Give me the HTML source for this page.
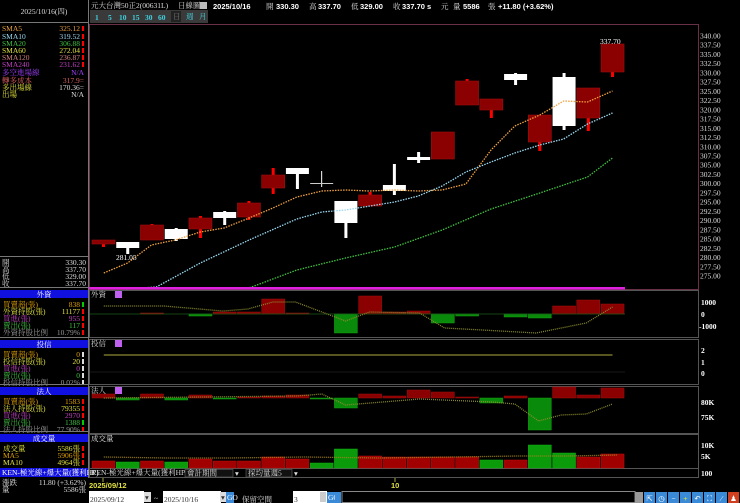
<!DOCTYPE html>
<html><head><meta charset="utf-8"><style>
html,body{margin:0;padding:0;background:#000;width:740px;height:503px;overflow:hidden}
svg{display:block}
text{font-family:"Liberation Serif","Noto Serif CJK SC","Noto Sans CJK TC",serif;font-size:7.5px}
.b{font-family:"Liberation Sans","Noto Sans CJK TC",sans-serif;font-weight:bold}
</style></head><body>
<svg id="s" width="740" height="503" viewBox="0 0 740 503" xmlns="http://www.w3.org/2000/svg">
<rect width="740" height="503" fill="#000"/>
<line x1="88.5" y1="0" x2="88.5" y2="478" stroke="#777"/>
<line x1="0" y1="22.5" x2="88" y2="22.5" stroke="#777"/>
<text x="44" y="14" fill="#ddd" text-anchor="middle">2025/10/16(四)</text>
<g text-anchor="start">
<text x="2" y="31" fill="#e8a040">SMA5</text><text x="80" y="31" fill="#e8a040" text-anchor="end">325.12</text>
<text x="2" y="39" fill="#9ad8f0">SMA10</text><text x="80" y="39" fill="#9ad8f0" text-anchor="end">319.52</text>
<text x="2" y="46" fill="#40c040">SMA20</text><text x="80" y="46" fill="#40c040" text-anchor="end">306.88</text>
<text x="2" y="53" fill="#e0e040">SMA60</text><text x="80" y="53" fill="#e0e040" text-anchor="end">272.04</text>
<text x="2" y="60" fill="#d08080">SMA120</text><text x="80" y="60" fill="#d08080" text-anchor="end">236.87</text>
<text x="2" y="67" fill="#c040c0">SMA240</text><text x="80" y="67" fill="#c040c0" text-anchor="end">231.62</text>
<text x="2" y="75" fill="#a040ff">多空進場線</text><text x="84" y="75" fill="#a040ff" text-anchor="end">N/A</text>
<text x="2" y="83" fill="#e06060">轉多成本</text><text x="84" y="83" fill="#e06060" text-anchor="end">317.9=</text>
<text x="2" y="90" fill="#e0e040">多出場線</text><text x="84" y="90" fill="#ddd" text-anchor="end">170.36=</text>
<text x="2" y="97" fill="#e0e040">出場</text><text x="84" y="97" fill="#ddd" text-anchor="end">N/A</text>
</g>
<g fill="#f00"><rect x="82" y="26" width="2" height="5"/><rect x="82" y="34" width="2" height="5"/><rect x="82" y="41" width="2" height="5"/><rect x="82" y="48" width="2" height="5"/><rect x="82" y="55" width="2" height="5"/><rect x="82" y="62" width="2" height="5"/></g>
<line x1="0" y1="256.5" x2="88" y2="256.5" stroke="#777"/>
<g fill="#ddd"><text x="2" y="265">開</text><text x="86" y="265" text-anchor="end">330.30</text>
<text x="2" y="272">高</text><text x="86" y="272" text-anchor="end">337.70</text>
<text x="2" y="279">低</text><text x="86" y="279" text-anchor="end">329.00</text>
<text x="2" y="286">收</text><text x="86" y="286" text-anchor="end">337.70</text></g>
<g id="left"></g>
<rect x="0" y="468" width="88" height="9" fill="#1010e0"/>
<text x="2" y="475" fill="#fff" font-size="7">KEN-極光線+爆大量(獲利HP)</text>
<text x="2" y="485" fill="#ddd">漲跌</text><text x="86" y="485" fill="#ddd" text-anchor="end">11.80 (+3.62%)</text>
<text x="2" y="492" fill="#ddd">量</text><text x="86" y="492" fill="#ddd" text-anchor="end">5586張</text>

<text x="91" y="8" fill="#ddd" font-size="7">元大台灣50正2(00631L)</text>
<text x="178" y="8" fill="#ddd" font-size="7">日線圖</text>
<rect x="200" y="2" width="7" height="7" fill="#bbb"/>
<text x="213" y="9" fill="#fff" class="b" font-size="9">2025/10/16</text>
<text x="266" y="9" fill="#ddd" font-size="7">開</text><text x="276" y="9" fill="#fff" class="b" font-size="9">330.30</text>
<text x="309" y="9" fill="#ddd" font-size="7">高</text><text x="318" y="9" fill="#fff" class="b" font-size="9">337.70</text>
<text x="351" y="9" fill="#ddd" font-size="7">低</text><text x="360" y="9" fill="#fff" class="b" font-size="9">329.00</text>
<text x="393" y="9" fill="#ddd" font-size="7">收</text><text x="402" y="9" fill="#fff" class="b" font-size="9">337.70 s</text>
<text x="441" y="9" fill="#ddd" font-size="7">元</text>
<text x="453" y="9" fill="#ddd" font-size="7">量</text><text x="463" y="9" fill="#fff" class="b" font-size="9">5586</text>
<text x="488" y="9" fill="#ddd" font-size="7">張</text><text x="498" y="9" fill="#fff" class="b" font-size="9">+11.80 (+3.62%)</text>
<rect x="90" y="10" width="118" height="13" fill="#3a3a3a"/>
<g class="b" font-size="9" fill="#40d0e0">
<text x="95" y="20">1</text><text x="108" y="20">5</text><text x="119" y="20">10</text><text x="132" y="20">15</text><text x="145" y="20">30</text><text x="158" y="20">60</text></g>
<rect x="171" y="11" width="10" height="11" fill="#222"/>
<text x="173" y="19" fill="#777" font-size="7">日</text><text x="186" y="19" fill="#40d0e0" font-size="7">週</text><text x="199" y="19" fill="#40d0e0" font-size="7">月</text>

<rect x="89.5" y="24.5" width="609" height="265" fill="none" stroke="#6a3048"/>
<g id="axis" fill="#ddd" font-size="7.5"></g>
<g id="main"></g>
<rect x="89" y="287" width="536" height="2.5" fill="#e020e0"/>
<text x="600" y="44" fill="#fff" font-size="7.5">337.70</text>
<text x="116" y="260" fill="#fff" font-size="7.5">281.05</text>

<rect x="89.5" y="290.5" width="609" height="47" fill="none" stroke="#555"/>
<rect x="89.5" y="339.5" width="609" height="45" fill="none" stroke="#555"/>
<rect x="89.5" y="386.5" width="609" height="47" fill="none" stroke="#555"/>
<rect x="89.5" y="434.5" width="609" height="34" fill="none" stroke="#555"/>
<rect x="89.5" y="468.5" width="609" height="9" fill="none" stroke="#555"/>
<text x="91" y="297" fill="#ddd" font-size="6.5">外資</text><rect x="115" y="291" width="7" height="7" fill="#c060f0"/>
<text x="91" y="346" fill="#ddd" font-size="6.5">投信</text><rect x="115" y="340" width="7" height="7" fill="#c060f0"/>
<text x="91" y="393" fill="#ddd" font-size="6.5">法人</text><rect x="115" y="387" width="7" height="7" fill="#c060f0"/>
<text x="91" y="441" fill="#ddd" font-size="6.5">成交量</text>
<g id="subs"></g>
<g fill="#fff" class="b" font-size="7">
<text x="701" y="305">1000</text><text x="701" y="317">0</text><text x="699" y="329">-1000</text>
<text x="701" y="353">2</text><text x="701" y="365">1</text><text x="701" y="376">0</text>
<text x="701" y="405">80K</text><text x="701" y="420">75K</text>
<text x="701" y="448">10K</text><text x="701" y="459">5K</text><text x="701" y="476">100</text></g>
<text x="91" y="475" fill="#ddd" font-size="6.5">KEN-極光線+爆大量(獲利HP)</text>
<rect x="185" y="469.5" width="48" height="7.5" fill="#111" stroke="#666" stroke-width=".6"/><text x="187" y="475.5" fill="#ddd" font-size="6">會計期間</text><text x="235" y="476" fill="#ddd" font-size="6">▾</text>
<rect x="246" y="469.5" width="46" height="7.5" fill="#111" stroke="#666" stroke-width=".6"/><text x="248" y="475.5" fill="#ddd" font-size="6">採均量週5</text><text x="294" y="476" fill="#ddd" font-size="6">▾</text>
<line x1="103" y1="478" x2="103" y2="482" stroke="#aa4"/><line x1="395" y1="478" x2="395" y2="482" stroke="#aa4"/>
<text x="89" y="488" fill="#e0e040" class="b" font-size="8">2025/09/12</text>
<text x="391" y="488" fill="#e0e040" class="b" font-size="8">10</text>

<rect x="89" y="491" width="55" height="12" fill="#fff"/><text x="90" y="502" fill="#333" font-size="11" font-family="Liberation Serif">2025/09/12</text>
<rect x="144" y="492" width="7" height="10" fill="#ddd"/><text x="145" y="500" fill="#333" font-size="6">▾</text>
<text x="154" y="501" fill="#ddd" font-size="9">~</text>
<rect x="163" y="491" width="58" height="12" fill="#fff"/><text x="164" y="502" fill="#333" font-size="11">2025/10/16</text>
<rect x="220" y="492" width="6" height="10" fill="#ddd"/><text x="221" y="500" fill="#333" font-size="6">▾</text>
<rect x="226" y="492" width="8" height="11" fill="#3a8ad8"/><text x="227" y="500" fill="#fff" font-size="5">GO</text>
<text x="242" y="502" fill="#ddd" font-size="12">保留空間</text>
<rect x="293" y="491" width="34" height="12" fill="#fff"/><text x="294" y="502" fill="#333" font-size="11">3</text>
<rect x="320" y="492" width="6" height="10" fill="#ccc"/>
<rect x="327" y="492" width="8" height="11" fill="#3a8ad8"/><text x="328" y="500" fill="#fff" font-size="5">GO</text>
<rect x="335" y="492" width="6" height="11" fill="#3a8ad8"/>
<rect x="342" y="491.5" width="293" height="11" fill="#000" stroke="#888"/>
<rect x="635" y="492" width="8" height="11" fill="#999"/>
<g id="icons"></g>
</svg>
<script>
var NS="http://www.w3.org/2000/svg";
function el(p,t,a){var e=document.createElementNS(NS,t);for(var k in a)e.setAttribute(k,a[k]);document.getElementById(p).appendChild(e);return e;}
function tx(p,x,y,s,f,anc){var e=el(p,"text",{x:x,y:y,fill:f});if(anc)e.setAttribute("text-anchor",anc);e.textContent=s;}
function X(x){return 85+(x-85)*1.253;}
function mp(s){return s.split(" ").map(function(q){var a=q.split(",");return X(+a[0]).toFixed(1)+","+a[1];}).join(" ");}
for(var i=0;i<=26;i++){var v=340-i*2.5;var y=36+(340-v)*3.692;tx("axis",700,y+2.5,v.toFixed(2),"#ddd");}
var C=[["r",240,244,240,247],["w",242,248,242,254],["r",225,240,224,240],["w",229,239,228,241],["r",218,229,216,238],["w",212,218,211,225],["r",203,217,201,220],["r",175,188,168,194],["w",168,174,168,189],["w",183,184,171,187],["w",201,223,201,238],["r",195,206,192,206],["w",185,191,164,195],["w",157,160,152,163],["r",132,159,132,159],["r",81,105,79,105],["r",99,110,99,118],["w",74,80,73,85],["r",115,142,115,151],["w",77,126,73,130],["r",88,118,88,131],["r",44,72,44,77]];
function cx(i){return 103.5+24.24*i;}
C.forEach(function(c,i){var x=cx(i);
 if(c[0]=="r"){el("main","rect",{x:x-1.5,y:c[3],width:3,height:c[4]-c[3],fill:"#f00"});el("main","rect",{x:x-11.5,y:c[1],width:23,height:Math.max(1,c[2]-c[1]),fill:"#8b0000",stroke:"#a01010","stroke-width":.6});}
 else{var wd=(i==9)?1:3;el("main","rect",{x:x-wd/2,y:c[3],width:wd,height:c[4]-c[3],fill:"#fff"});el("main","rect",{x:x-11.5,y:c[1],width:23,height:Math.max(1,c[2]-c[1]),fill:(i==9?"#ccc":"#fff")});}
});
function pl(p,pts,col,dash,w){el(p,"polyline",{points:mp(pts),fill:"none",stroke:col,"stroke-width":w||1.3,"stroke-dasharray":dash||""});}
pl("main","100,273 119,263 138,245 157,240 177,232 196,228 216,218 235,208 254,197 274,191 293,190 312,191 332,190 351,191 370,190 389,184 409,150 428,126 448,115 467,101 486,102 506,91","#f0a040","1.5 1.2");
pl("main","118,289 142,287 177,263 216,240 254,219 274,212 293,210 332,202 351,196 370,186 389,172 409,162 428,153 448,145 467,139 486,124 506,113","#9ad8f0","1.5 1.2");
pl("main","212,289 218,287 254,270 293,258 332,247 370,230 409,209 448,193 486,177 506,158","#40c040","1.5 1.2");
function bx(i){return 92+24.24*i;}
function bar(i,t,b,g){el("subs","rect",{x:bx(i),y:Math.min(t,b),width:23,height:Math.max(1,Math.abs(b-t)),fill:g?"#0a8a0a":"#8b0000",stroke:g?"#10a010":"#a01010","stroke-width":.5});}
var FW=[[2,313,314,0],[4,314,316,1],[5,312,314,0],[6,312,314,0],[7,299,314,0],[8,313,314,0],[10,314,333,1],[11,296,314,0],[12,312,314,0],[13,311,314,0],[14,314,323,1],[15,314,316,1],[17,314,317,1],[18,314,318,1],[19,306,314,0],[20,300,314,0],[21,304,314,0]];
FW.forEach(function(b){bar(b[0],b[1],b[2],b[3]);});
el("subs","line",{x1:90,y1:314,x2:625,y2:314,stroke:"#1a5a1a","stroke-width":.8});
pl("subs","100,306 148,306 195,311 215,309 235,302 253,302 293,321 312,312 352,313 372,328 402,330 445,333 485,323 506,307","#8a8a30",1);
el("subs","line",{x1:X(100),y1:355,x2:X(506),y2:355,stroke:"#8a8a30","stroke-width":1.2});
el("subs","line",{x1:90,y1:372,x2:625,y2:372,stroke:"#222","stroke-width":.8});
var FA=[[0,394,398,0],[1,398,400,1],[2,394,398,0],[3,398,400,1],[4,395,398,0],[5,398,399,1],[6,397,398,0],[7,396,398,0],[8,395,398,0],[9,398,399,1],[10,398,408,1],[11,394,398,0],[12,396,398,0],[13,390,398,0],[14,392,398,0],[15,397,398,0],[16,398,403,1],[17,396,398,0],[18,398,430,1],[19,387,398,0],[20,395,398,0],[21,388,398,0]];
FA.forEach(function(b){bar(b[0],b[1],b[2],b[3]);});
pl("subs","100,398 177,397 254,396 274,394 293,405 352,399 410,402 428,404 447,421 465,415 485,414 506,404","#8a8a30",1);
var V=[461,462,461,462,459,461,461,457,459,463,449,456,457,457,457,457,460,460,445,453,457,454];
var VG=[0,1,0,1,0,0,0,0,0,1,1,0,0,0,0,0,1,0,1,1,0,0];
V.forEach(function(t,i){el("subs","rect",{x:bx(i),y:t,width:23,height:468-t,fill:VG[i]?"#0a9a0a":"#a00000",stroke:VG[i]?"#10b010":"#c01010","stroke-width":.5});});
pl("subs","100,457 150,458 200,458 260,457 320,458 380,457 430,456 470,456 510,455","#a08020",1);
function sec(y,title,rows){el("left","rect",{x:0,y:y,width:88,height:8,fill:"#1010e0"});tx("left",44,y+7,title,"#fff","middle");
 rows.forEach(function(r,k){var yy=y+17+k*7;tx("left",3,yy,r[0],r[2]);tx("left",80,yy,r[1],r[2],"end");el("left","rect",{x:82,y:yy-5,width:2,height:5,fill:r[3]});});
 el("left","line",{x1:0,y1:y-2.5,x2:88,y2:y-2.5,stroke:"#777"});}
sec(290,"外資",[["買賣超(張)","838","#e0a000","#0c0"],["外資持股(張)","11177","#e0e040","#f00"],["買進(張)","955","#c040c0","#f00"],["賣出(張)","117","#40c040","#f00"],["外資持股比例","10.79%","#999","#f00"]]);
sec(340,"投信",[["買賣超(張)","0","#e0a000","#ddd"],["投信持股(張)","20","#e0e040","#ddd"],["買進(張)","0","#c040c0","#ddd"],["賣出(張)","0","#40c040","#ddd"],["投信持股比例","0.02%","#999","#ddd"]]);
sec(387,"法人",[["買賣超(張)","1583","#e0a000","#f00"],["法人持股(張)","79355","#e0e040","#f00"],["買進(張)","2970","#c040c0","#f00"],["賣出(張)","1388","#40c040","#0c0"],["法人持股比例","77.90%","#999","#f00"]]);
sec(434,"成交量",[["成交量","5586張","#e0e040","#f00"],["MA5","5906張","#e0a000","#f00"],["MA10","4964張","#e0e040","#f00"]]);
var cols=["#3a8ad8","#3a8ad8","#3a8ad8","#3a8ad8","#3a8ad8","#3a8ad8","#3a8ad8","#d04020"];
var gl=["⇱","◷","−","+","↶","⛶","⁄","♟"];
for(var i=0;i<8;i++){el("icons","rect",{x:644+i*12,y:492,width:11,height:11,fill:cols[i]});var t=el("icons","text",{x:649.5+i*12,y:501,fill:i==3?"#ff0":"#fff","text-anchor":"middle","font-size":"9"});t.textContent=gl[i];}
</script>
</body></html>
